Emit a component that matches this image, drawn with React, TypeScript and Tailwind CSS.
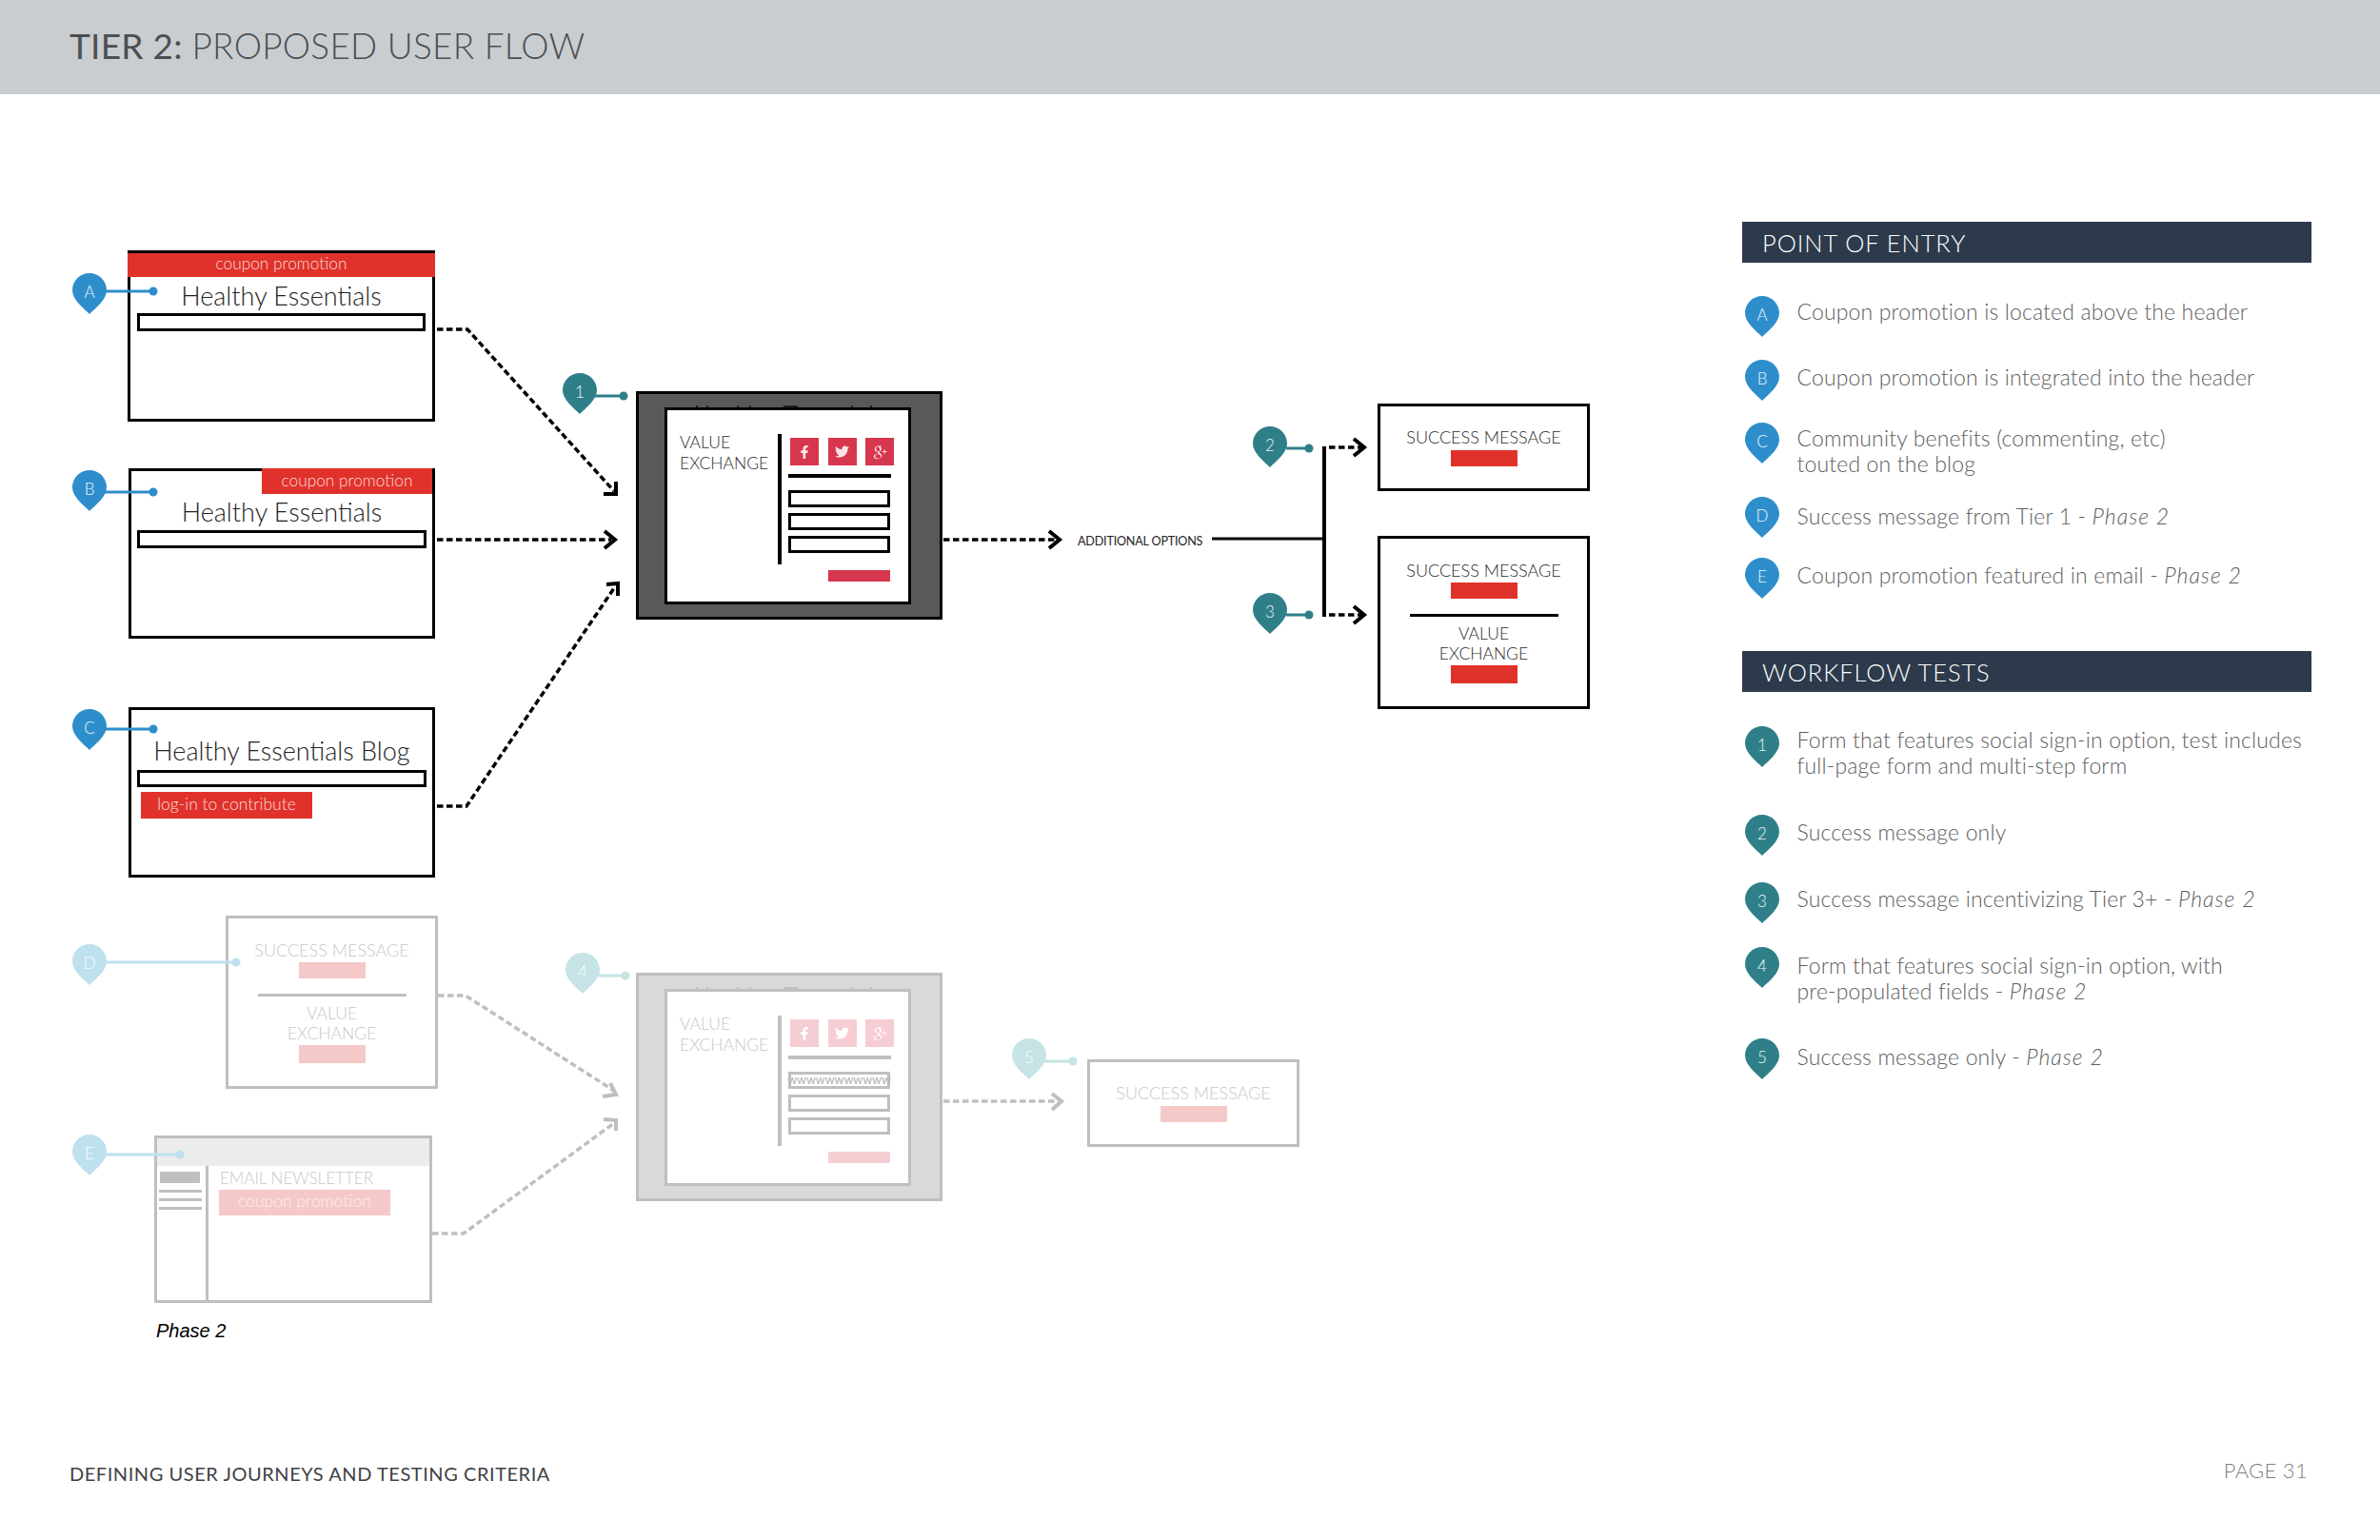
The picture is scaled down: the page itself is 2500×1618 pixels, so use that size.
import React from "react";
import { FaFacebookF, FaTwitter } from "react-icons/fa";
import { TiSocialGooglePlus } from "react-icons/ti";

function Pin({ label, fill, className }: { label: string; fill: string; className: string }) {
  return (
    <div className={"relative h-[43px] w-[36px] shrink-0 " + className}>
      <svg viewBox="0 0 36 43" className="absolute inset-0 h-full w-full">
        <path d="M18 0C28 0 36 8 36 18C36 28 24 37 18 43C12 37 0 28 0 18C0 8 8 0 18 0Z" fill={fill} />
      </svg>
      <span className="absolute inset-x-0 top-[9px] text-center text-[17px] leading-[22px] font-light text-white/90">{label}</span>
    </div>
  );
}

const INK = "#000000";
const PALE = "#bfbfbf";

function Chevron({ points, stroke }: { points: string; stroke: string }) {
  return <polyline points={points} fill="none" stroke={stroke} strokeWidth={4} />;
}

function Dash({ d, stroke }: { d: string; stroke: string }) {
  return <path d={d} fill="none" stroke={stroke} strokeWidth={3.5} strokeDasharray="6.5 3.5" />;
}

function Leader({ x1, x2, y, color }: { x1: number; x2: number; y: number; color: string }) {
  return (
    <g>
      <line x1={x1} x2={x2} y1={y} y2={y} stroke={color} strokeWidth={3} />
      <circle cx={x2} cy={y} r={4.5} fill={color} />
    </g>
  );
}

function SuccessExchange({ faded, className }: { faded?: boolean; className: string }) {
  const text = faded ? "text-[#c8c8c8]" : "text-[#2b2b2b]";
  const red = faded ? "bg-[#f5c9c8]" : "bg-[#e0322b]";
  return (
    <div
      className={
        "absolute flex h-[182px] w-[223px] flex-col items-center border-[3px] pt-[22.5px] " +
        (faded ? "border-[#bfbfbf] " : "border-black ") +
        className
      }
    >
      <div className={"text-[18px] leading-[20px] font-light whitespace-nowrap " + text}>SUCCESS MESSAGE</div>
      <div className={"mt-[3.5px] h-[17px] w-[70px] " + red} />
      <div className={"mt-[16px] h-[3px] w-[156px] " + (faded ? "bg-[#bfbfbf]" : "bg-black")} />
      <div className={"mt-[6.5px] text-center text-[17.5px] leading-[21.5px] font-light " + text}>
        VALUE
        <br />
        EXCHANGE
      </div>
      <div className={"mt-[1.5px] h-[19px] w-[70px] " + red} />
    </div>
  );
}

function SuccessOnly({ faded, className }: { faded?: boolean; className: string }) {
  return (
    <div
      className={
        "absolute flex h-[92px] w-[223px] flex-col items-center border-[3px] pt-[22px] " +
        (faded ? "border-[#bfbfbf] " : "border-black ") +
        className
      }
    >
      <div className={"text-[18px] leading-[20px] font-light whitespace-nowrap " + (faded ? "text-[#c8c8c8]" : "text-[#2b2b2b]")}>
        SUCCESS MESSAGE
      </div>
      <div className={"mt-[4px] h-[17px] w-[70px] " + (faded ? "bg-[#f5c9c8]" : "bg-[#e0322b]")} />
    </div>
  );
}

function FormBox({ faded, className }: { faded?: boolean; className: string }) {
  const line = faded ? "border-[#bfbfbf]" : "border-black";
  const bar = faded ? "bg-[#bfbfbf]" : "bg-black";
  const social = faded ? "bg-[#f5cdd3] text-white" : "bg-[#d6374e] text-[#fbe3e6]";
  return (
    <div
      className={
        "absolute h-[240px] w-[322px] border-[3px] pt-[14px] pl-[27px] " +
        (faded ? "border-[#bfbfbf] bg-[#d9d9d9] " : "border-black bg-[#595959] ") +
        className
      }
    >
      <svg viewBox="0 0 316 2" className="absolute top-[12px] left-0 h-[2px] w-[316px]">
        <path
          d="M61 0v2M72 0v2M104 0v2M117 0v2M152 1h15M224 0v2M244 0v2"
          stroke={faded ? "#b8b8b8" : "#111111"}
          strokeWidth="1.5"
          fill="none"
        />
      </svg>
      <div className={"flex h-[207px] w-[259px] border-[3px] bg-white " + line}>
        <div
          className={
            "w-[116px] shrink-0 pt-[23px] pl-[13px] text-[17.5px] leading-[21.5px] font-light " +
            (faded ? "text-[#c8c8c8]" : "text-[#2b2b2b]")
          }
        >
          VALUE
          <br />
          EXCHANGE
        </div>
        <div className={"mt-[25px] h-[137px] w-[4px] shrink-0 " + bar} />
        <div className="ml-[7px] flex flex-col pt-[4px]">
          <div className="mt-[25px] flex gap-[9.5px] pl-[2px]">
            <div className={"flex h-[29px] w-[30px] items-center justify-center " + social}>
              <FaFacebookF className="h-[14px] w-[14px]" />
            </div>
            <div className={"flex h-[29px] w-[30px] items-center justify-center " + social}>
              <FaTwitter className="h-[15px] w-[15px]" />
            </div>
            <div className={"flex h-[29px] w-[30px] items-center justify-center " + social}>
              <TiSocialGooglePlus className="h-[22px] w-[22px]" />
            </div>
          </div>
          <div className={"mt-[9px] h-[4px] w-[108px] " + bar} />
          <div className={"mt-[13px] flex h-[18px] w-[107px] items-center justify-center border-[3px] " + line}>
            {faded ? <span className="text-[12.5px] leading-none font-medium text-[#b5b5b5]">wwwwwwwwwww</span> : null}
          </div>
          <div className={"mt-[6px] h-[18px] w-[107px] border-[3px] " + line} />
          <div className={"mt-[6px] h-[18px] w-[107px] border-[3px] " + line} />
          <div className={"mt-[18px] ml-[42px] h-[12px] w-[65px] " + (faded ? "bg-[#f5cdd3]" : "bg-[#d6374e]")} />
        </div>
      </div>
    </div>
  );
}

function SectionBar({ children }: { children: React.ReactNode }) {
  return (
    <div className="flex h-[43px] items-center bg-[#2c3a4b] pt-[2px] pl-[21px] text-[25.5px] font-light tracking-[0.9px] text-white">
      {children}
    </div>
  );
}

function Row({ pin, fill, h, mt, children }: { pin: string; fill: string; h: string; mt: string; children: React.ReactNode }) {
  return (
    <div className={"flex pl-[3px] " + h}>
      <Pin label={pin} fill={fill} className="" />
      <p className={"ml-[18.5px] text-[23px] leading-[27px] font-light tracking-[0.15px] whitespace-nowrap text-[#606060] " + mt}>{children}</p>
    </div>
  );
}

function Phase() {
  return <em className="tracking-[1px]">Phase 2</em>;
}

const BLUE = "#2e8ecb";
const TEAL = "#2f7f88";

export default function App() {
  return (
    <div className="flex h-[1618px] w-[2500px] flex-col overflow-hidden bg-white [font-family:Lato,sans-serif]">
      <header className="flex h-[99px] items-center bg-[#c9cdd0] pb-[3px] pl-[73px] text-[37px] tracking-[0.25px] whitespace-nowrap text-[#4b4f53]">
        <span className="font-normal">TIER 2:&nbsp;</span>
        <span className="font-light">PROPOSED USER FLOW</span>
      </header>

      <main className="flex flex-1">
        <section className="relative w-[1830px] shrink-0">
          {/* A */}
          <div className="absolute top-[164px] left-[134px] flex h-[180px] w-[323px] flex-col border-[3px] border-black">
            <div className="-mx-[3px] flex h-[25px] shrink-0 items-center justify-center bg-[#e0322b] pb-[3px] text-[17.3px] font-light text-[#fbdcd9]">
              coupon promotion
            </div>
            <div className="flex h-[38px] shrink-0 items-center justify-center pt-[2px] text-[27px] font-light text-[#222222]">Healthy Essentials</div>
            <div className="mx-[7px] h-[19px] shrink-0 border-[3px] border-black" />
          </div>

          {/* B */}
          <div className="absolute top-[393px] left-[135px] flex h-[179px] w-[322px] flex-col border-[3px] border-black">
            <div className="-mt-[3px] flex h-[27px] w-[179px] shrink-0 items-center justify-center self-end bg-[#e0322b] pb-[2px] text-[17.3px] font-light text-[#fbdcd9]">
              coupon promotion
            </div>
            <div className="flex h-[38px] shrink-0 items-center justify-center text-[27px] font-light text-[#222222]">Healthy Essentials</div>
            <div className="mx-[6px] h-[19px] shrink-0 border-[3px] border-black" />
          </div>

          {/* C */}
          <div className="absolute top-[644px] left-[135px] flex h-[179px] w-[322px] flex-col border-[3px] border-black">
            <div className="flex h-[63px] shrink-0 items-end justify-center text-[27px] font-light text-[#222222]">Healthy Essentials Blog</div>
            <div className="mx-[6px] h-[18px] shrink-0 border-[3px] border-black" />
            <div className="mt-[5px] ml-[10px] flex h-[28px] w-[180px] shrink-0 items-center justify-center bg-[#e0322b] pb-[2px] text-[17.5px] font-light text-[#fbdcd9]">
              log-in to contribute
            </div>
          </div>

          {/* 1 */}
          <FormBox className="top-[312px] left-[668px]" />

          <div className="absolute top-[462px] left-[1132px] text-[12.6px] leading-[16px] font-normal tracking-[-0.2px] whitespace-nowrap text-[#222222]">ADDITIONAL OPTIONS</div>

          <SuccessOnly className="top-[325px] left-[1447px]" />
          <SuccessExchange className="top-[464px] left-[1447px]" />

          {/* D */}
          <SuccessExchange faded className="top-[863px] left-[237px]" />

          {/* E */}
          <div className="absolute top-[1094px] left-[162px] flex h-[176px] w-[292px] flex-col border-[3px] border-[#bfbfbf]">
            <div className="h-[29px] shrink-0 bg-[#ececec]" />
            <div className="flex flex-1">
              <div className="w-[54px] shrink-0 border-r-[3px] border-[#bfbfbf] pt-[6px]">
                <div className="ml-[3px] h-[12px] w-[42px] bg-[#bfbfbf]" />
                <div className="mt-[7px] ml-[2px] h-[3px] w-[45px] bg-[#bfbfbf]" />
                <div className="mt-[6px] ml-[2px] h-[3px] w-[45px] bg-[#bfbfbf]" />
                <div className="mt-[6px] ml-[2px] h-[3px] w-[45px] bg-[#bfbfbf]" />
              </div>
              <div className="pt-[3px] pl-[12px]">
                <div className="text-[17px] leading-[20px] font-light whitespace-nowrap text-[#c8c8c8]">EMAIL NEWSLETTER</div>
                <div className="mt-[2px] -ml-[1px] flex h-[27px] w-[180px] items-center justify-center bg-[#f5c9c8] pb-[2px] text-[17.5px] font-light text-[#fdeeee]">
                  coupon promotion
                </div>
              </div>
            </div>
          </div>

          <div className="absolute top-[1287px] left-[164px] [font-family:'Liberation_Sans',sans-serif] text-[20px] leading-[24px] text-black italic">Phase 2</div>

          <FormBox faded className="top-[923px] left-[668px]" />
          <SuccessOnly faded className="top-[1014px] left-[1142px]" />

          {/* connectors, drawn in page coordinates */}
          <svg viewBox="0 99 1830 1379" className="pointer-events-none absolute inset-0 h-[1379px] w-[1830px]">
            <Dash d="M459 346H491L645 516" stroke={INK} />
            <Chevron points="647,506 647,519 634,519" stroke={INK} />
            <Dash d="M459 567H642" stroke={INK} />
            <Chevron points="635,558 646,567 635,576" stroke={INK} />
            <Dash d="M459 847H490L645 618" stroke={INK} />
            <Chevron points="637,614 649,613 649,626" stroke={INK} />
            <Dash d="M991 567H1110" stroke={INK} />
            <Chevron points="1102,558 1113,567 1102,576" stroke={INK} />
            <line x1="1273" x2="1391" y1="566" y2="566" stroke={INK} strokeWidth="3" />
            <line x1="1391" x2="1391" y1="469" y2="648" stroke={INK} strokeWidth="4" />
            <Dash d="M1396 470H1431" stroke={INK} />
            <Chevron points="1422,461 1433,470 1422,479" stroke={INK} />
            <Dash d="M1396 646H1431" stroke={INK} />
            <Chevron points="1422,637 1433,646 1422,655" stroke={INK} />

            <Dash d="M460 1046H489L645 1146" stroke={PALE} />
            <Chevron points="641,1138 647,1150 633,1152" stroke={PALE} />
            <Dash d="M454 1296H487L645 1180" stroke={PALE} />
            <Chevron points="634,1176 647,1177 647,1188" stroke={PALE} />
            <Dash d="M991 1157H1112" stroke={PALE} />
            <Chevron points="1105,1149 1115,1157 1105,1166" stroke={PALE} />

            <Leader x1={110} x2={161} y={306} color={BLUE} />
            <Leader x1={110} x2={161} y={517} color={BLUE} />
            <Leader x1={110} x2={161} y={766} color={BLUE} />
            <Leader x1={625} x2={655} y={416} color={TEAL} />
            <Leader x1={1351} x2={1375} y={471} color={TEAL} />
            <Leader x1={1351} x2={1375} y={646} color={TEAL} />
            <Leader x1={110} x2={248} y={1011} color="#bfe0ee" />
            <Leader x1={110} x2={189} y={1213} color="#bfe0ee" />
            <Leader x1={628} x2={657} y={1025} color="#c6e3e5" />
            <Leader x1={1097} x2={1127} y={1115} color="#c6e3e5" />
          </svg>

          <Pin label="A" fill={BLUE} className="!absolute top-[188px] left-[76px]" />
          <Pin label="B" fill={BLUE} className="!absolute top-[395px] left-[76px]" />
          <Pin label="C" fill={BLUE} className="!absolute top-[646px] left-[76px]" />
          <Pin label="1" fill={TEAL} className="!absolute top-[293px] left-[591px]" />
          <Pin label="2" fill={TEAL} className="!absolute top-[349px] left-[1316px]" />
          <Pin label="3" fill={TEAL} className="!absolute top-[524px] left-[1316px]" />
          <Pin label="D" fill="#bfe0ee" className="!absolute top-[893px] left-[76px]" />
          <Pin label="E" fill="#bfe0ee" className="!absolute top-[1093px] left-[76px]" />
          <Pin label="4" fill="#c6e3e5" className="!absolute top-[902px] left-[594px]" />
          <Pin label="5" fill="#c6e3e5" className="!absolute top-[992px] left-[1063px]" />
        </section>

        <aside className="w-[598px] shrink-0 pt-[134px]">
          <SectionBar>POINT OF ENTRY</SectionBar>
          <div className="mt-[35px]">
            <Row pin="A" fill={BLUE} h="h-[67px]" mt="mt-[3px]">Coupon promotion is located above the header</Row>
            <Row pin="B" fill={BLUE} h="h-[66px]" mt="mt-[5px]">Coupon promotion is integrated into the header</Row>
            <Row pin="C" fill={BLUE} h="h-[78px]" mt="mt-[3px]">
              Community benefits (commenting, etc)
              <br />
              touted on the blog
            </Row>
            <Row pin="D" fill={BLUE} h="h-[64px]" mt="mt-[7px]">
              Success message from Tier 1 - <Phase />
            </Row>
            <Row pin="E" fill={BLUE} h="h-[98px]" mt="mt-[5px]">
              Coupon promotion featured in email - <Phase />
            </Row>
          </div>
          <SectionBar>WORKFLOW TESTS</SectionBar>
          <div className="mt-[36px]">
            <Row pin="1" fill={TEAL} h="h-[93px]" mt="mt-[1px]">
              Form that features social sign-in option, test includes
              <br />
              full-page form and multi-step form
            </Row>
            <Row pin="2" fill={TEAL} h="h-[71px]" mt="mt-[5px]">Success message only</Row>
            <Row pin="3" fill={TEAL} h="h-[68px]" mt="mt-[4px]">
              Success message incentivizing Tier 3+ - <Phase />
            </Row>
            <Row pin="4" fill={TEAL} h="h-[96px]" mt="mt-[6px]">
              Form that features social sign-in option, with
              <br />
              pre-populated fields - <Phase />
            </Row>
            <Row pin="5" fill={TEAL} h="h-[43px]" mt="mt-[6px]">
              Success message only - <Phase />
            </Row>
          </div>
        </aside>
      </main>

      <footer className="flex h-[140px] shrink-0 items-center justify-between pr-[76px] pl-[73px]">
        <span className="text-[20px] font-normal tracking-[0.55px] text-[#3f4245]">DEFINING USER JOURNEYS AND TESTING CRITERIA</span>
        <span className="-mt-[8px] text-[22px] font-light tracking-[0.3px] text-[#808080]">PAGE 31</span>
      </footer>
    </div>
  );
}
